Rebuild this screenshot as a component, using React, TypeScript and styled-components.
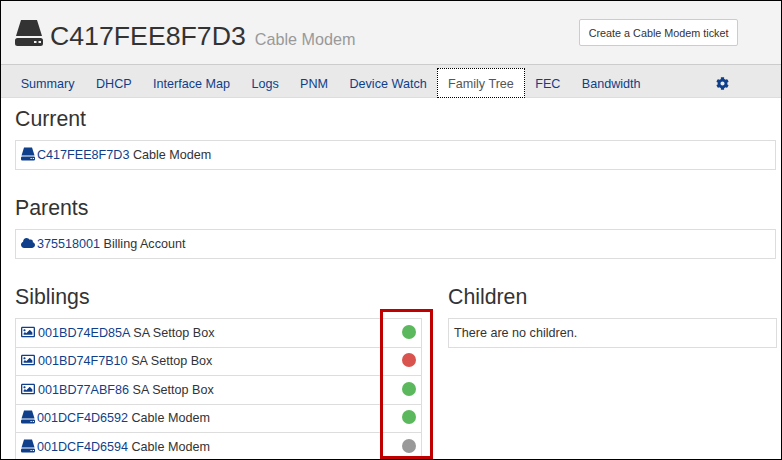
import React from 'react';
import styled, {createGlobalStyle} from 'styled-components';
import {FaCloud, FaCog, FaRegImage} from 'react-icons/fa';

const navItems = ['Summary', 'DHCP', 'Interface Map', 'Logs', 'PNM', 'Device Watch', 'Family Tree', 'FEC', 'Bandwidth'];

const siblings = [
  {id: '001BD74ED85A', kind: 'SA Settop Box', status: '#5cb85c'},
  {id: '001BD74F7B10', kind: 'SA Settop Box', status: '#d9534f'},
  {id: '001BD77ABF86', kind: 'SA Settop Box', status: '#5cb85c'},
  {id: '001DCF4D6592', kind: 'Cable Modem', status: '#5cb85c'},
  {id: '001DCF4D6594', kind: 'Cable Modem', status: '#999999'},
];

function DriveIcon({size}: {size: number}) {
  return (
    <svg width={size} height={size} viewBox="0 0 28 28" fill="currentColor">
      <path d="M6 1h16l5 16H1z" />
      <path fillRule="evenodd" d="M2.500 19h23a2.500 2.500 0 0 1 2.500 2.500v3a2.500 2.500 0 0 1-2.500 2.500h-23A2.500 2.500 0 0 1 0 24.500v-3A2.500 2.500 0 0 1 2.500 19zM19 22v2h2.500v-2zM23.500 22v2H26v-2z" />
    </svg>
  );
}

export default function App(): JSX.Element {
  return (
    <Frame>
      <GlobalStyle />
      <Header>
        <Title>
          <TitleIcon><DriveIcon size={28} /></TitleIcon>
          C417FEE8F7D3
          <Subtitle>Cable Modem</Subtitle>
        </Title>
        <TicketButton>Create a Cable Modem ticket</TicketButton>
      </Header>
      <Nav>
        {navItems.map((item) => (
          <NavItem key={item} $active={item === 'Family Tree'}>{item}</NavItem>
        ))}
        <Settings><FaCog size={13} /></Settings>
      </Nav>
      <Content>
        <Section>
          <Heading>Current</Heading>
          <ListRow>
            <Label>
              <RowIcon><DriveIcon size={14} /></RowIcon>
              <DeviceLink>C417FEE8F7D3</DeviceLink> Cable Modem
            </Label>
          </ListRow>
        </Section>
        <Section>
          <Heading>Parents</Heading>
          <ListRow>
            <Label>
              <RowIcon><FaCloud size={14} /></RowIcon>
              <DeviceLink>375518001</DeviceLink> Billing Account
            </Label>
          </ListRow>
        </Section>
        <Columns>
          <Column>
            <Heading>Siblings</Heading>
            <List>
              {siblings.map((sibling) => (
                <ListRow key={sibling.id}>
                  <Label>
                    <RowIcon $wide={sibling.kind !== 'Cable Modem'}>
                      {sibling.kind === 'Cable Modem' ? <DriveIcon size={14} /> : <FaRegImage size={14} />}
                    </RowIcon>
                    <DeviceLink>{sibling.id}</DeviceLink> {sibling.kind}
                  </Label>
                  <StatusDot $color={sibling.status} />
                </ListRow>
              ))}
            </List>
          </Column>
          <Column>
            <Heading>Children</Heading>
            <ListRow>
              <Label>There are no children.</Label>
            </ListRow>
          </Column>
        </Columns>
      </Content>
      <Highlight />
    </Frame>
  );
}

const GlobalStyle = createGlobalStyle`
  html, body {
    margin: 0;
    background: #fff;
  }
`;
const Frame = styled.div`
  position: relative;
  box-sizing: border-box;
  width: 782px;
  height: 460px;
  overflow: hidden;
  border: 1px solid #000;
  font-family: "Liberation Sans", Arial, sans-serif;
  font-size: 12.6px;
  color: #333;
  background: #fff;
`;
const Header = styled.header`
  display: flex;
  justify-content: space-between;
  align-items: flex-start;
  box-sizing: border-box;
  height: 64px;
  padding: 18px 43px 0 14px;
  background: #f3f3f3;
  border-bottom: 1px solid #ccc;
`;
const Title = styled.h1`
  display: flex;
  align-items: baseline;
  margin: 0;
  padding-top: 2px;
  font-size: 26.700px;
  line-height: 30px;
  font-weight: 400;
  color: #333;
`;
const TitleIcon = styled.span`
  align-self: flex-start;
  height: 28px;
  margin: -2px 7px 0 0;
`;
const Subtitle = styled.small`
  margin-left: 9px;
  font-size: 16.200px;
  color: #999;
`;
const TicketButton = styled.button`
  height: 27px;
  padding: 0 8.500px;
  background: #fff;
  border: 1px solid #ccc;
  border-radius: 2px;
  font: inherit;
  font-size: 10.800px;
  color: #333;
`;
const Nav = styled.nav`
  display: flex;
  align-items: stretch;
  box-sizing: border-box;
  height: 33px;
  padding: 3px 0 0 9px;
  background: #e9e9e9;
  border-bottom: 1px solid #ddd;
`;
const NavItem = styled.a<{$active?: boolean}>`
  display: flex;
  align-items: center;
  margin-bottom: -1px;
  padding: 1px 10.700px 0;
  color: ${({$active}) => ($active ? '#555' : '#0f3f8a')};
  background: ${({$active}) => ($active ? '#fff' : 'transparent')};
  outline: ${({$active}) => ($active ? '1px dotted #000' : 'none')};
  outline-offset: -1px;
`;
const Settings = styled.span`
  display: flex;
  align-items: center;
  margin-left: 65px;
  padding-top: 2px;
  color: #0f3f8a;
`;
const Content = styled.main`
  padding: 7px 4px 0 14px;
`;
const Section = styled.section`
  margin: 0 1px 25.500px 0;
`;
const Heading = styled.h3`
  margin: 0 0 7px;
  font-size: 21.300px;
  line-height: 28px;
  font-weight: 400;
  color: #333;
`;
const Columns = styled.div`
  display: grid;
  grid-template-columns: 407px 329px;
  column-gap: 26px;
`;
const Column = styled.div``;
const List = styled.div`
  display: flex;
  flex-direction: column;
`;
const ListRow = styled.div`
  display: flex;
  justify-content: space-between;
  align-items: center;
  box-sizing: border-box;
  height: 29.500px;
  margin-bottom: -1px;
  padding: 0 5px;
  border: 1px solid #ddd;
`;
const Label = styled.span`
  display: block;
  padding-top: 1px;
  white-space: nowrap;
`;
const RowIcon = styled.span<{$wide?: boolean}>`
  display: inline-block;
  margin-right: ${({$wide}) => ($wide ? '3px' : '2px')};
  color: #0f3f8a;
  vertical-align: -2px;
`;
const DeviceLink = styled.a`
  color: #0f3f8a;
`;
const StatusDot = styled.span<{$color: string}>`
  width: 14px;
  height: 14px;
  margin-bottom: 2px;
  border-radius: 50%;
  background: ${({$color}) => $color};
`;
// annotation drawn over the screenshot
const Highlight = styled.div`
  position: absolute;
  left: 379px;
  top: 308px;
  box-sizing: border-box;
  width: 53px;
  height: 150px;
  border: 3px solid #c00000;
`;
